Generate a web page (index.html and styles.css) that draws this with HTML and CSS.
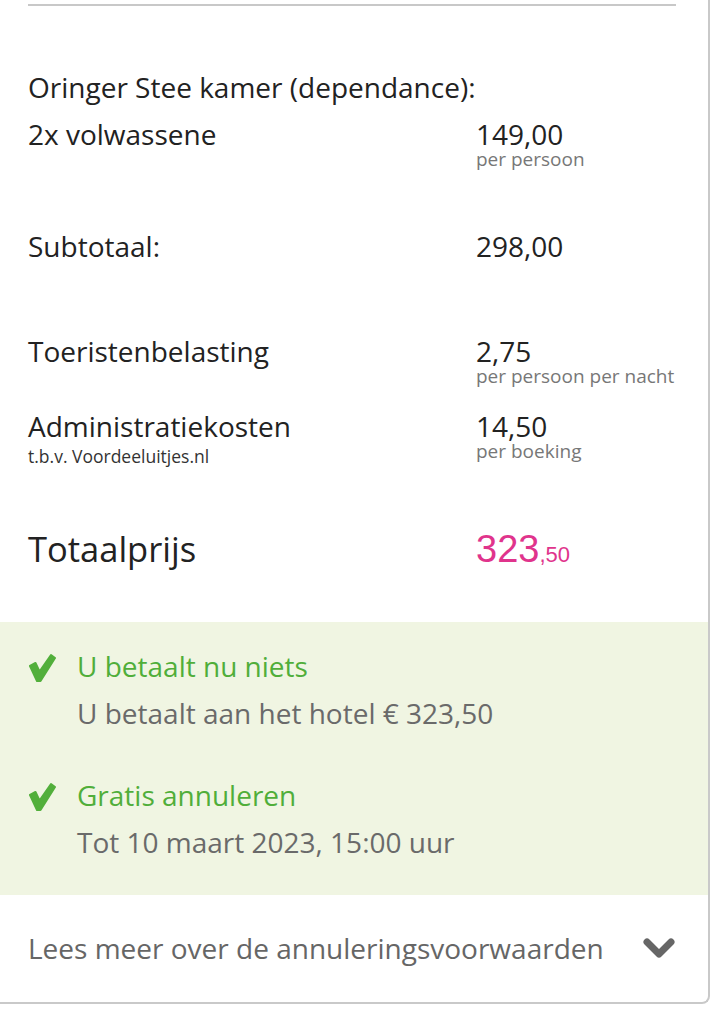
FILE: index.html
```html
<!DOCTYPE html>
<html lang="nl">
<head>
<meta charset="utf-8">
<title>Prijsoverzicht</title>
<link rel="stylesheet" href="styles.css">
</head>
<body>
<div class="card">
  <div class="inner">
    <div class="divider"></div>
    <div class="room">Oringer Stee kamer (dependance):</div>

    <div class="row row-adults">
      <div class="label">2x volwassene</div>
      <div class="value">
        <div class="amount">149,00</div>
        <div class="unit">per persoon</div>
      </div>
    </div>

    <div class="row row-subtotal">
      <div class="label">Subtotaal:</div>
      <div class="value"><div class="amount">298,00</div></div>
    </div>

    <div class="row row-tax">
      <div class="label">Toeristenbelasting</div>
      <div class="value">
        <div class="amount">2,75</div>
        <div class="unit">per persoon per nacht</div>
      </div>
    </div>

    <div class="row row-admin">
      <div class="label">
        <div>Administratiekosten</div>
        <div class="note">t.b.v. Voordeeluitjes.nl</div>
      </div>
      <div class="value">
        <div class="amount">14,50</div>
        <div class="unit">per boeking</div>
      </div>
    </div>

    <div class="row row-total">
      <div class="total-label">Totaalprijs</div>
      <div class="total-price"><span class="euros">323</span><span class="cents">,50</span></div>
    </div>
  </div>

  <div class="benefits">
    <div class="benefit">
      <svg class="check" width="28" height="30" viewBox="0 0 28 30" aria-hidden="true">
        <path d="M2 13 L7.5 10 L11.5 18.5 L23 2 L27 5 L12.5 28 L9 28 Z" fill="#52af3b" stroke="#52af3b" stroke-width="2" stroke-linejoin="round"/>
      </svg>
      <div class="benefit-text">
        <div class="benefit-title">U betaalt nu niets</div>
        <div class="benefit-sub">U betaalt aan het hotel € 323,50</div>
      </div>
    </div>
    <div class="benefit benefit-second">
      <svg class="check" width="28" height="30" viewBox="0 0 28 30" aria-hidden="true">
        <path d="M2 13 L7.5 10 L11.5 18.5 L23 2 L27 5 L12.5 28 L9 28 Z" fill="#52af3b" stroke="#52af3b" stroke-width="2" stroke-linejoin="round"/>
      </svg>
      <div class="benefit-text">
        <div class="benefit-title">Gratis annuleren</div>
        <div class="benefit-sub">Tot 10 maart 2023, 15:00 uur</div>
      </div>
    </div>
  </div>

  <div class="more">
    <span class="more-text">Lees meer over de annuleringsvoorwaarden</span>
    <svg class="chevron" width="34" height="22" viewBox="0 0 34 22" aria-hidden="true">
      <polyline points="5,5 17,17 29,5" fill="none" stroke="#666666" stroke-width="7" stroke-linecap="round" stroke-linejoin="round"/>
    </svg>
  </div>
</div>
</body>
</html>
```

FILE: styles.css
```css
html, body {
  margin: 0;
  padding: 0;
  background: #ffffff;
}

body {
  font-family: "Open Sans", "Liberation Sans", sans-serif;
  color: #222222;
}

.card {
  width: 708px;
  border-right: 2px solid #c9c9c9;
  border-bottom: 2px solid #c9c9c9;
  border-bottom-right-radius: 8px;
  padding-top: 4px;
  background: #ffffff;
}

.inner {
  padding: 0 32px 53px 28px;
}

.divider {
  height: 2px;
  background: #c8c8c8;
}

.room {
  margin-top: 65px;
  font-size: 28px;
  line-height: 32px;
}

.row {
  display: grid;
  grid-template-columns: 1fr 200px;
  font-size: 28px;
  line-height: 32px;
}

.row-adults { margin-top: 15px; }
.row-subtotal { margin-top: 62px; }
.row-tax { margin-top: 73px; }
.row-admin { margin-top: 25px; }
.row-total { margin-top: 64px; }

.unit {
  font-size: 19px;
  line-height: 18px;
  color: #777777;
  white-space: nowrap;
}

.note {
  margin-top: 5px;
  font-size: 17.5px;
  line-height: 18px;
  color: #333333;
  white-space: nowrap;
}

.total-label {
  font-size: 34.5px;
  line-height: 40px;
  color: #222222;
}

.total-price {
  font-family: "Liberation Sans", Arial, sans-serif;
  font-size: 38px;
  line-height: 40px;
  color: #e0348c;
}

.cents {
  font-size: 22px;
  line-height: 1;
}

.benefits {
  background: #f0f5e2;
  padding: 21px 32px 29px 28px;
}

.benefit {
  display: flex;
  gap: 21px;
  align-items: flex-start;
}

.benefit-second {
  margin-top: 35px;
}

.check {
  flex: none;
  margin-top: 10px;
}

.benefit-text {
  font-size: 28px;
  line-height: 47px;
}

.benefit-title {
  color: #50ae3a;
}

.benefit-sub {
  color: #6a6a6a;
}

.more {
  display: flex;
  justify-content: space-between;
  align-items: center;
  padding: 37px 32px 38px 28px;
}

.more-text {
  font-size: 28px;
  line-height: 32px;
  color: #666666;
}

.chevron {
  flex: none;
  display: block;
}
```
